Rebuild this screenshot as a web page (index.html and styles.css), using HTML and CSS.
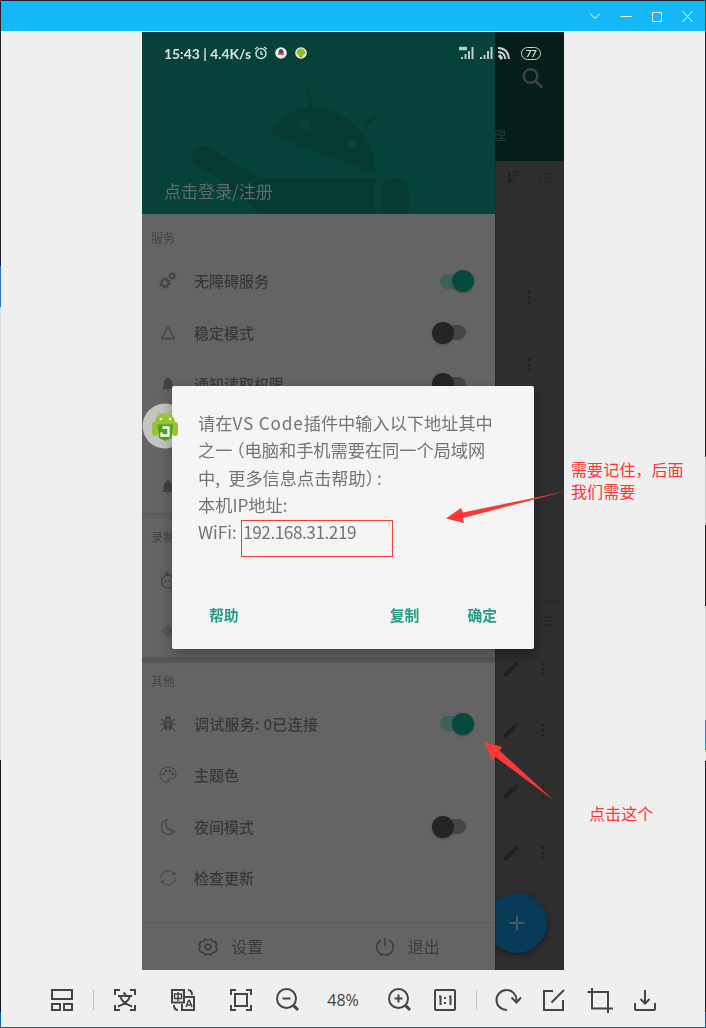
FILE: index.html
```html
<!DOCTYPE html>
<html lang="zh-CN">
<head>
<meta charset="utf-8">
<title>图片查看</title>
<link rel="stylesheet" href="styles.css">
</head>
<body>
<svg class="defs" width="0" height="0">
  <symbol id="dots" viewBox="0 0 6 16"><g fill="currentColor"><circle cx="3" cy="3" r="1.5"/><circle cx="3" cy="8" r="1.5"/><circle cx="3" cy="13" r="1.5"/></g></symbol>
  <symbol id="pencil" viewBox="0 0 16 16"><path fill="currentColor" d="M0.5 15.5L1.5 11.5L10 3.5L13 6.5L4.5 14.5ZM11 2.5L13 .7L15.6 3.2L14 5.5Z"/></symbol>
  <symbol id="list" viewBox="0 0 14 12"><path stroke="currentColor" fill="none" d="M0 2h2M4 2h9M0 6h2M4 6h9M0 10h2M4 10h9"/></symbol>
  <symbol id="bell" viewBox="0 0 14 16"><path fill="currentColor" d="M7 1C8 1 8.2 2 8.2 2.5C11 3.3 11.5 5.3 11.5 8V11L13 13H1L2.500 11V8C2.500 5.300 3 3.300 5.800 2.500C5.800 2 6 1 7 1ZM5.500 14H8.500Q7 16 5.500 14Z"/></symbol>
</svg>
<div class="window">
  <header class="titlebar">
    <svg width="14" height="14" viewBox="0 0 14 14"><path d="M2 4.500L7 9.500L12 4.500"/></svg>
    <svg width="14" height="14" viewBox="0 0 14 14"><path d="M1.500 7.500H13"/></svg>
    <svg width="14" height="14" viewBox="0 0 14 14"><path d="M2.500 3.500H11.500V12.500H2.500Z"/></svg>
    <svg width="14" height="14" viewBox="0 0 14 14"><path d="M1.500 2L11.500 13M11.500 2L1.500 13"/></svg>
  </header>

  <main class="viewer">
    <div class="phone">
      <div class="screen">
        <section class="app">
          <div class="app-head">
            <svg class="search" width="24" height="24" viewBox="0 0 24 24"><circle cx="9.500" cy="9" r="6.800"/><path d="M14.500 14L21.500 21"/></svg>
            <div class="app-tab">理</div>
          </div>
          <div class="app-tools">
            <svg width="14" height="14" viewBox="0 0 14 14"><path stroke="currentColor" fill="none" stroke-width="2" d="M3.500 0V11"/><path fill="currentColor" d="M0 8.500H7L3.500 13ZM7 0H13V2H7ZM7 4H11.500V5.500H7ZM7 7.500H10V9H7ZM7 11H8.500V12.500H7Z"/></svg>
            <svg width="14" height="12"><use href="#list"/></svg>
          </div>
          <div class="app-row first"><svg width="6" height="16"><use href="#dots"/></svg></div>
          <div class="app-row second"><svg width="6" height="16"><use href="#dots"/></svg></div>
          <div class="app-section"><svg width="14" height="12"><use href="#list"/></svg></div>
          <div class="app-row"><svg width="16" height="16"><use href="#pencil"/></svg><svg width="6" height="16"><use href="#dots"/></svg></div>
          <div class="app-row"><svg width="16" height="16"><use href="#pencil"/></svg><svg width="6" height="16"><use href="#dots"/></svg></div>
          <div class="app-row"><svg width="16" height="16"><use href="#pencil"/></svg><svg width="6" height="16"><use href="#dots"/></svg></div>
          <div class="app-row"><svg width="16" height="16"><use href="#pencil"/></svg><svg width="6" height="16"><use href="#dots"/></svg></div>
          <div class="fab"><svg width="16" height="16" viewBox="0 0 16 16"><path d="M8 .5V15.500M.5 8H15.500"/></svg></div>
        </section>

        <aside class="drawer">
          <div class="hero">
            <svg class="robot" width="353" height="182" viewBox="0 0 353 182">
              <path d="M128 102C144 76 168 71 190 79C218 89 234 114 233 142Z"/>
              <path class="limb thin" d="M165 57L170 77M234 84L221 94"/>
              <path class="limb" d="M61 125L104 150"/>
              <path d="M50 122L60 114L118 146H233V182H118ZM239 182V157Q239 146 252 146Q267 146 267 158V182Z"/>
              <circle class="eye" cx="163" cy="93" r="5.500"/><circle class="eye" cx="210" cy="112" r="5.500"/>
            </svg>
            <div class="login">点击登录/注册</div>
          </div>

          <div class="label top">服务</div>
          <div class="row"><svg width="18" height="18" viewBox="0 0 18 18"><g fill="none" stroke="currentColor"><circle cx="6" cy="11" r="3.400" stroke-width="2"/><circle cx="6" cy="11" r="5" stroke-width="1.500" stroke-dasharray="1.960"/><circle cx="13.200" cy="4" r="2.200" stroke-width="1.500"/><circle cx="13.200" cy="4" r="3.500" stroke-width="1" stroke-dasharray="1.370"/></g></svg><span>无障碍服务</span><i class="switch on"></i></div>
          <div class="row"><svg width="18" height="18" viewBox="0 0 18 18"><path fill="none" stroke="currentColor" stroke-width="1.300" stroke-linejoin="round" d="M9 3L15.500 14.500H2.500Z"/></svg><span>稳定模式</span><i class="switch"></i></div>
          <div class="row"><svg width="14" height="16"><use href="#bell"/></svg><span>通知读取权限</span><i class="switch"></i></div>
          <div class="row"></div>
          <div class="row"><svg width="14" height="16"><use href="#bell"/></svg></div>
          <div class="band"></div>
          <div class="label">录制</div>
          <div class="row"><svg width="18" height="18" viewBox="0 0 18 18"><g fill="none" stroke="currentColor" stroke-width="1.200"><circle cx="9" cy="10.500" r="6.500"/><path d="M9 4Q6 3 7 1Q9 1 9 4"/></g><circle cx="6.500" cy="10" r=".9" fill="currentColor"/><circle cx="10.500" cy="10" r=".9" fill="currentColor"/></svg></div>
          <div class="row faint"><svg width="14" height="16" viewBox="0 0 14 16"><path fill="none" stroke="currentColor" stroke-width="1.500" d="M2 6V10M4.500 4V12M7 1.500V14.500M9.500 4V12M12 6V10"/></svg></div>
          <div class="band strong"></div>
          <div class="label">其他</div>
          <div class="row"><svg width="18" height="18" viewBox="0 0 18 18"><path fill="currentColor" d="M5.500 4.500Q6 1 9 1Q12 1 12.500 4.500ZM4.500 5.500H8.500V15.500Q4.500 15 4.500 10ZM9.500 5.500H13.500V10Q13.500 15 9.500 15.500Z"/><path stroke="currentColor" fill="none" stroke-width="1.200" d="M2 3.500L5 6M1 9H5M2 16L5.500 12.500M16 3.500L13 6M17 9H13M16 16L12.500 12.500"/></svg><span class="debug">调试服务: 0已连接</span><i class="switch on"></i></div>
          <div class="row"><svg width="18" height="18" viewBox="0 0 18 18"><path fill="none" stroke="currentColor" stroke-width="1" d="M9 1C4.500 1 1 4.500 1 9C1 13 4.500 16.500 8.500 16.500C10.500 16.500 7.500 12.300 10.500 12.300H14C16 12.300 17 10.500 17 8.500C17 4 13.500 1 9 1Z"/><g fill="currentColor"><circle cx="4.500" cy="8" r="1.300"/><circle cx="7" cy="5" r="1.300"/><circle cx="11" cy="5" r="1.300"/><circle cx="13.700" cy="8" r="1.300"/></g></svg><span>主题色</span></div>
          <div class="row"><svg width="18" height="18" viewBox="0 0 18 18"><path fill="none" stroke="currentColor" stroke-width="1.100" stroke-linejoin="round" d="M8 1.500C0 4 1 15.500 9 16.300C12 16.500 14 15.500 15.500 13C8 12.500 5.500 7 8 1.500Z"/></svg><span>夜间模式</span><i class="switch"></i></div>
          <div class="row"><svg width="18" height="18" viewBox="0 0 18 18"><path fill="none" stroke="currentColor" stroke-width="1" d="M2 9C1.500 2 11 -1 15 5M16 8.500C16.500 16 7 19 3 12.500M12.500 5.500H15.500V2.500M5.500 12H2.500V15"/></svg><span>检查更新</span></div>
          <div class="drawer-foot">
            <div class="foot-item"><svg width="20" height="20" viewBox="0 0 20 20"><g fill="none" stroke="currentColor" stroke-width="1.500"><path stroke-linejoin="round" d="M7 2Q10 4 13 2L14.200 4.500H17L19.200 8Q16.500 10 19.200 12L17 15.500H14.200L13 18Q10 16 7 18L5.800 15.500H3L.8 12Q3.500 10 .8 8L3 4.500H5.800Z"/><circle cx="10" cy="10" r="2.800"/></g></svg><span>设置</span></div>
            <div class="foot-item"><svg width="20" height="20" viewBox="0 0 20 20"><path fill="none" stroke="currentColor" stroke-width="1.500" d="M10 1V9M6 3C-1 7 1 18 10 18C19 18 21 7 14 3"/></svg><span>退出</span></div>
          </div>
        </aside>
      </div>

      <div class="status">
        <span class="clock">15:43 | 4.4K/s</span>
        <svg class="alarm" width="14" height="14" viewBox="0 0 14 14"><circle cx="7" cy="7.500" r="5"/><path d="M7 5V8L9 8.500M1 3L4 1M13 3L10 1"/></svg>
        <svg class="qq" width="12" height="12" viewBox="0 0 12 12"><circle cx="6" cy="6" r="5.800" fill="#eee"/><path fill="#56484a" d="M3.500 8Q3 2 6 2Q9 2 8.500 8Z"/><path stroke="#d4584c" stroke-width="1.800" d="M3.500 7H8.500"/></svg>
        <svg class="bot" width="12" height="12" viewBox="0 0 12 12"><circle cx="6" cy="6" r="5.800" fill="#eee"/><path fill="#91bf28" d="M1.500 7Q1.500 1.500 6 1.500Q10.500 1.500 10.500 7L8.500 8L7.500 10.500H4.500L3.500 8Z"/></svg>
        <svg class="signal" width="16" height="14" viewBox="0 0 16 14"><path stroke-width="2" d="M3 11V13M6.500 8V13M10 5V13M13.500 1V13"/><path stroke-width="3.500" d="M0 2.500H8"/></svg>
        <svg class="signal two" width="15" height="14" viewBox="0 0 15 14"><path stroke-width="2" d="M2 11V13M5.500 9V13M9 5V13M12.500 1V13"/></svg>
        <svg class="wifi" width="14" height="14" viewBox="0 0 14 14"><path fill="none" stroke-width="2" d="M1 2Q11 2 12 13M1 6Q7.500 6 8.500 13"/><path stroke-width="3" d="M2 9L5 13"/></svg>
        <span class="battery">77</span>
      </div>

      <svg class="ball" width="46" height="46" viewBox="0 0 46 46"><circle cx="23" cy="23" r="22.500" fill="#c4c5c3"/></svg>

      <div class="dialog">
        <div class="message">
          <p>请在<span class="product">VS Code</span>插件中输入以下地址其中</p>
          <p>之一<span class="open">（</span>电脑和手机需要在同一个局域网</p>
          <p>中<span class="comma">,</span>更多信息点击帮助<span class="close">）</span>:</p>
          <p>本机IP地址:</p>
          <p>WiFi: <span class="ip">192.168.31.219</span></p>
        </div>
        <div class="actions"><b>帮助</b><b class="copy">复制</b><b>确定</b></div>
      </div>

      <svg class="ball" width="46" height="46" viewBox="0 0 46 46"><g fill="#98c434"><path d="M13 19Q14 10 23 10Q32 10 33 19V21H13Z"/><rect x="10" y="19" width="6" height="14" rx="3"/><path d="M13 20H33V31H13Z"/><rect x="30" y="19" width="6" height="14" rx="3"/><path stroke="#98c434" d="M15.500 8L18 12M30.500 8L28 12"/></g><circle cx="19" cy="16" r="1.200" fill="#eee"/><circle cx="28" cy="16" r="1.200" fill="#eee"/><path fill="#4da41c" d="M15.500 21.500H31L29.500 35L23 38L17 35Z"/><path fill="none" stroke="#fff" stroke-width="2.300" d="M20.500 24.500H26.500V32.500H19.500V29.500"/></svg>
    </div>
  </main>

  <footer class="toolbar">
    <svg class="i1" viewBox="0 0 28 28"><path d="M4 4H24V13H4ZM4 18H12V24H4ZM16 18H24V24H16Z"/></svg>
    <i class="sep"></i>
    <svg class="i2" viewBox="0 0 28 28"><path d="M4 9V4H9M19 4H24V9M24 19V24H19M9 24H4V19M7 10H21M12.500 6.500L15 9.500M9 10Q11 17 21 20.500M19 10Q17 17 7 20.500"/></svg>
    <svg class="i3" viewBox="0 0 28 28"><path d="M3 4H15V16.500H3ZM16 11H25V24H13V18M19 4Q23 4 23 9M5 19Q5 24 9 24"/><path class="fine" d="M5.500 8H12.500V12.500H5.500ZM9 6V15M17 21L19.500 14.500H20.500L23 21M18 19H22"/></svg>
    <svg class="i3" viewBox="0 0 28 28"><path d="M4 9V4H9M19 4H24V9M24 19V24H19M9 24H4V19M8 8H20V20H8Z"/></svg>
    <svg class="i4" viewBox="0 0 28 28"><circle cx="12.500" cy="12.500" r="9.500"/><path d="M8.500 12.500H16.500"/><path class="handle" d="M19.500 19.500L24 24"/></svg>
    <span class="percent">48%</span>
    <svg class="i5" viewBox="0 0 28 28"><circle cx="12.500" cy="12.500" r="9.500"/><path d="M8.500 12.500H16.500M12.500 8.500V16.500"/><path class="handle" d="M19.500 19.500L24 24"/></svg>
    <svg class="i6" viewBox="0 0 28 28"><rect x="4" y="4" width="20" height="20" rx="1"/><path d="M8 10.500H9.500V19M18 10.500H19.500V19M14 11V13M14 16V18"/></svg>
    <i class="sep"></i>
    <svg class="i2" viewBox="0 0 28 28"><path d="M13 24A10 10 0 1 1 22.500 14.500M17.500 11.500L22.500 16.500L27 11.500"/></svg>
    <svg class="i7" viewBox="0 0 28 28"><path d="M13 5H4V24H23V14M11.500 16.500L24 4"/></svg>
    <svg class="i7" viewBox="0 0 28 28"><path d="M1.500 6H22V27M6 2V22.500H27"/></svg>
    <svg class="i8" viewBox="0 0 28 28"><path d="M14 4V17M9.500 13L14 17.500L18.500 13M4 17V23Q4 24 5 24H23Q24 24 24 23V17"/></svg>
  </footer>

  <div class="mark-box"></div>
  <div class="note note-ip">需要记住，后面<br>我们需要</div>
  <div class="note note-switch">点击这个</div>
  <svg class="arrows" width="706" height="1028" viewBox="0 0 706 1028"><path d="M446 518.500L461 508L463 512.500L567 491L463 518L464 523ZM484 742L502 747L499.500 750.500L554 800.500L495.500 757L492 760Z"/></svg>
  <i class="edge left"></i><i class="edge right"></i>
</div>
</body>
</html>
```

FILE: styles.css
```css
* { box-sizing: border-box; }
body { margin: 0; background: #1d2327; font-family: "Noto Sans CJK SC", sans-serif; }
.defs { position: absolute; }
.window { position: relative; display: flex; flex-direction: column; width: 706px; height: 1028px; overflow: hidden; background: #efefef; padding: 0 1px; border-top: 1px solid #1d2327; border-bottom: 1px solid #0863a0; border-radius: 2px; }
.titlebar { flex: none; display: flex; align-items: center; justify-content: flex-end; gap: 17px; height: 31px; padding-right: 10px; background: #14b8f8; border-bottom: 1px solid #fff; }
.titlebar svg { fill: none; stroke: #fff; stroke-width: 1; }
.viewer { flex: none; display: flex; justify-content: center; height: 938px; }
.phone { position: relative; width: 422px; height: 938px; overflow: hidden; }
.screen { position: relative; height: 938px; filter: blur(.4px); }

.app { height: 938px; padding-left: 353px; overflow: hidden; background: #2d2e2d; color: #202020; }
.app-head { height: 129px; padding: 35px 0 0 26px; background: #041e19; }
.search { display: block; fill: none; stroke: #40403e; stroke-width: 2.500; }
.app-tab { margin: 35px 0 0 -28px; font-size: 13px; line-height: 18px; color: #283531; }
.app-tools { display: flex; align-items: center; justify-content: space-between; height: 34px; padding: 0 10px 0 11px; }
.app-row { display: flex; align-items: center; justify-content: space-between; height: 61.300px; padding: 0 18px 0 8px; }
.app-row.first { height: 68px; margin-top: 68px; padding-left: 31px; }
.app-row.second { height: 68px; padding-left: 31px; }
.app-section { display: flex; align-items: center; justify-content: flex-end; height: 40px; margin-top: 201px; padding-right: 10px; border-top: 1px solid #292929; }
.app-section + .app-row { margin-top: -2px; }
.fab { display: grid; place-items: center; width: 60px; height: 60px; margin: 10px 0 0 -8px; border-radius: 50%; background: #083b57; box-shadow: 0 2px 5px #1b1b1b; }
.fab svg { stroke: #465861; stroke-width: 2; }

.drawer { position: absolute; top: 0; left: 0; width: 353px; height: 938px; display: flex; flex-direction: column; background: #636463; color: #3b3c3c; box-shadow: 0 0 2px #202020; }
.hero { display: grid; height: 182px; background: #07423a; flex: none; }
.hero > * { grid-area: 1 / 1; }
.robot { fill: #063a33; }
.limb { fill: none; stroke: #063a33; stroke-width: 22; stroke-linecap: round; }
.limb.thin { stroke-width: 3; }
.eye { fill: #07423a; }
.login { align-self: end; padding: 0 0 11px 22px; font-size: 17px; line-height: 24px; color: #5e6b66; }
.label { flex: none; height: 35.500px; padding-left: 9px; font-size: 12px; line-height: 35px; color: #434444; }
.label.top { height: 41.500px; line-height: 48px; }
.row { flex: none; display: grid; grid-template-columns: 18px 1fr 36px; column-gap: 17px; align-items: center; height: 51.500px; padding: 0 20px 0 17px; font-size: 15px; font-weight: 500; color: #373838; }
.row > svg { justify-self: center; color: #414242; }
.row > span { margin-top: -1px; }
.row.faint > svg { color: #505151; }
.debug { letter-spacing: .28px; }
.switch { position: relative; width: 34px; height: 15px; margin-left: -7px; border-radius: 8px; background: #444545; }
.switch::after { content: ""; position: absolute; top: -3.500px; left: 0; width: 22px; height: 22px; border-radius: 50%; background: #232424; box-shadow: 0 1px 2px #4a4a4a; }
.switch.on { margin-left: 1px; background: #3c6158; }
.switch.on::after { left: 12px; background: #06493e; }
.band { flex: none; height: 5.500px; background: linear-gradient(#5b5b5b, #606160); }
.band.strong { background: #565756; }
.drawer-foot { display: grid; grid-template-columns: 1fr 1fr; height: 48px; margin-top: auto; border-top: 1px solid #5c5d5c; font-size: 16px; color: #3b3c3c; }
.foot-item { display: flex; align-items: center; justify-content: center; gap: 13px; padding-left: 1px; }
.foot-item span { margin-top: -2px; }

.status { position: absolute; top: 12px; left: 22px; right: 22px; height: 18px; display: flex; align-items: center; color: #d9e1de; font-size: 13.500px; filter: blur(.25px); }
.clock { width: 90px; font-family: Lato, sans-serif; font-weight: 700; font-size: 13.900px; white-space: nowrap; }
.alarm { fill: none; stroke: #cfdad7; stroke-width: 1.500; }
.qq { margin-left: 7px; }
.bot { margin-left: 8px; }
.signal { margin-left: 152px; stroke: #bdc9c6; }
.signal.two { margin-left: 4px; }
.wifi { margin-left: 3px; stroke: #cbd3d0; }
.battery { width: 20px; height: 13px; margin-left: 10px; border: 1.500px solid #cbd3d0; border-radius: 7px; font: 700 10px/10px Lato, sans-serif; text-align: center; letter-spacing: -.5px; }

.ball { position: absolute; left: 0; top: 371px; filter: blur(.4px); }
.dialog { position: absolute; left: 30px; top: 354px; width: 362px; height: 263px; display: flex; flex-direction: column; justify-content: space-between; padding: 23px 26px 22px; background: #f5f5f5; border-radius: 2px; box-shadow: 0 5px 13px rgba(0,0,0,.32); color: #747474; filter: blur(.3px); }
.message p { margin: 0; font-size: 17.200px; line-height: 27.300px; white-space: nowrap; }
.product { letter-spacing: .85px; }
.open { padding-left: 3.600px; font-feature-settings: "halt"; }
.close { padding-right: 2.600px; font-feature-settings: "halt"; }
.comma { display: inline-block; width: 13px; }
.ip { letter-spacing: -.45px; margin-left: 2.500px; }
.actions { display: flex; padding: 0 11px; font-size: 14.800px; line-height: 24px; color: #269b86; }
.actions b { font-weight: 700; }
.copy { margin-left: auto; margin-right: 48px; }

.toolbar { display: flex; align-items: center; height: 57px; padding-top: 3px; flex: none; }
.toolbar svg { width: 28px; height: 28px; fill: none; stroke: #454545; stroke-width: 2; flex: none; }
.toolbar svg .fine { stroke-width: 1.500; }
.toolbar svg .handle { stroke-width: 3; }
.sep { width: 1px; height: 20px; margin-left: 17px; background: #c4c4cf; }
.toolbar .i1 { margin-left: 47px; }
.toolbar .i2 { margin-left: 17px; }
.toolbar .i3 { margin-left: 30px; }
.toolbar .i4 { margin-left: 19px; }
.percent { width: 40px; margin-left: 21px; font: 16px/24px "Open Sans", sans-serif; text-align: center; color: #444; }
.toolbar .i5 { margin-left: 23px; }
.toolbar .i6 { margin-left: 17px; }
.toolbar .i7 { margin-left: 18px; }
.toolbar .i8 { margin-left: 17px; }

.mark-box { position: absolute; left: 241px; top: 519px; width: 152px; height: 37px; border: 1px solid #fb3b3a; }
.note { position: absolute; font-size: 16.100px; line-height: 22px; white-space: nowrap; color: #fb3837; }
.note-ip { left: 571px; top: 457px; }
.note-switch { left: 589px; top: 801px; }
.arrows { position: absolute; left: 0; top: -1px; fill: #fb3837; }
.edge { position: absolute; top: -1px; width: 1px; height: 1028px; }
.edge.left { left: 0; background: linear-gradient(#1d2327 266px, #2875c8 266px 307px, #dedede 307px 760px, #171a1d 760px 1012px, #0863a0 1012px); }
.edge.right { right: 0; background: linear-gradient(#25292c 366px, #262626 366px 457px, #c9c9c9 457px 525px, #222 525px 606px, #d1d1d1 606px 720px, #248dc0 720px 750px, #dedede 750px 761px, #15191d 761px 1012px, #0863a0 1012px); }
```
